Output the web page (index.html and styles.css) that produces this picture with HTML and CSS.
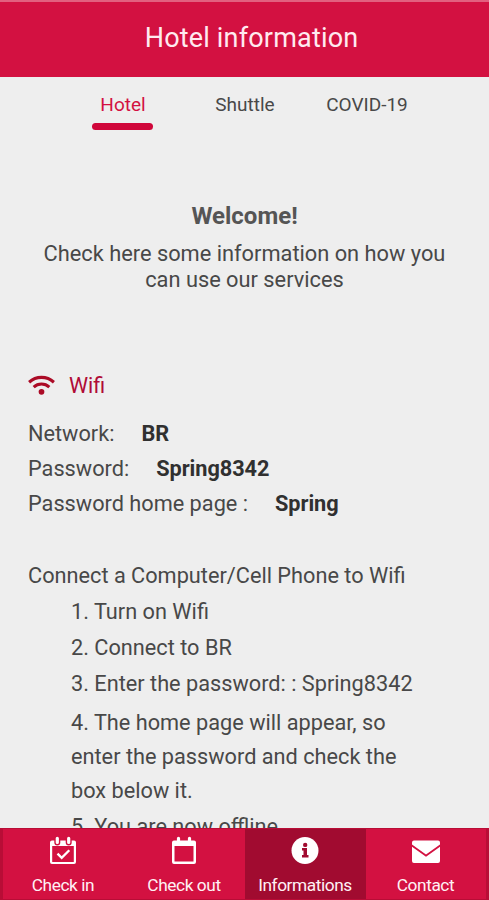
FILE: index.html
```html
<!DOCTYPE html>
<html lang="en">
<head>
<meta charset="utf-8">
<title>Hotel information</title>
<link rel="stylesheet" href="styles.css">
</head>
<body>
<div class="app">
  <header class="header"><h1>Hotel information</h1></header>
  <main class="content">
    <nav class="tabs">
      <a class="tab active">Hotel</a>
      <a class="tab">Shuttle</a>
      <a class="tab">COVID-19</a>
    </nav>
    <section class="welcome">
      <h2>Welcome!</h2>
      <p>Check here some information on how you<br>can use our services</p>
    </section>
    <section class="wifi">
      <h3>
        <svg class="wifi-icon" viewBox="0 0 28 22"><g fill="none" stroke="currentColor" stroke-width="3.200" stroke-linecap="butt"><path d="M1 7.600C8.500 .8 19.500 .8 27 7.600"/><path d="M5.800 12.600C10.500 8.300 17.500 8.300 22.200 12.600"/></g><circle cx="14" cy="17.600" r="3" fill="currentColor"/></svg>
        <span>Wifi</span>
      </h3>
      <dl>
        <div><dt>Network:</dt><dd>BR</dd></div>
        <div><dt>Password:</dt><dd>Spring8342</dd></div>
        <div><dt>Password home page :</dt><dd>Spring</dd></div>
      </dl>
      <h4>Connect a Computer/Cell Phone to Wifi</h4>
      <ol>
        <li>1. Turn on Wifi</li>
        <li>2. Connect to BR</li>
        <li>3. Enter the password: : Spring8342</li>
        <li class="long">4. The home page will appear, so<br>enter the password and check the<br>box below it.</li>
        <li>5. You are now offline</li>
      </ol>
    </section>
  </main>
  <nav class="bottom">
    <a class="item">
      <svg viewBox="0 0 28 30"><path d="M3 4.500h22a2 2 0 0 1 2 2v19.500a2 2 0 0 1-2 2H3a2 2 0 0 1-2-2V6.500a2 2 0 0 1 2-2zM3.200 10v16h21.600V10z" fill="#fff" fill-rule="evenodd"/><path class="ring" d="M8.300 3v3.500M19.700 3v3.500"/><path d="M8.300 2.300v4.200M19.700 2.300v4.200" stroke="#fff" stroke-width="3.200" stroke-linecap="round"/><path d="m8.500 17.600 4.200 4.200 7.600-7.600" fill="none" stroke="#fff" stroke-width="2.300"/></svg>
      <span>Check in</span>
    </a>
    <a class="item">
      <svg viewBox="0 0 28 30"><path d="M4 4.500h20a2 2 0 0 1 2 2v19.500a2 2 0 0 1-2 2H4a2 2 0 0 1-2-2V6.500a2 2 0 0 1 2-2zM4.500 10v15.500h19V10z" fill="#fff" fill-rule="evenodd"/><path d="M8.500 2.300v4.200M19.500 2.300v4.200" stroke="#fff" stroke-width="3.200" stroke-linecap="round"/></svg>
      <span>Check out</span>
    </a>
    <a class="item selected">
      <svg viewBox="0 0 28 30"><circle cx="14" cy="14.500" r="13.500" fill="#fff"/><path d="M11 12h5v7h1.500v2.500H11V19h1.500v-4.500H11z" fill="#a10b30"/><circle cx="14.200" cy="8.900" r="2.200" fill="#a10b30"/></svg>
      <span>Informations</span>
    </a>
    <a class="item">
      <svg viewBox="0 0 28 30"><path d="M2 4.500h24a2 2 0 0 1 2 2V8.500L14 18.500 0 8.500V6.500a2 2 0 0 1 2-2z" fill="#fff"/><path d="M0 10.700 14 20.700 28 10.700V25a2 2 0 0 1-2 2H2a2 2 0 0 1-2-2z" fill="#fff"/></svg>
      <span>Contact</span>
    </a>
  </nav>
</div>
</body>
</html>
```
FILE: styles.css
```css
* { box-sizing: border-box; margin: 0; padding: 0; }
body { background: #eee; color: #484848; font-family: Roboto, sans-serif; font-size: 21.73px; }
.app { height: 900px; display: flex; flex-direction: column; overflow: hidden; }
.header { flex: none; height: 77px; background: #d31141; border-top: 2px solid #e2607f; display: flex; justify-content: center; padding: 20px 0 0 14px; }
.header h1 { font-size: 27px; line-height: 32px; font-weight: 400; color: #ffeaf0; letter-spacing: .18px; }
.content { flex: 1; min-height: 0; overflow: hidden; }
.tabs { display: grid; grid-template-columns: repeat(3, 122px); justify-content: center; height: 54px; padding: 16px 0 0 1px; font-size: 19px; line-height: 24px; }
.tab { display: flex; flex-direction: column; align-items: center; }
.tab.active { color: #d31141; }
.tab.active::after { content: ""; width: 61px; height: 7px; border-radius: 4px; background: #d0063a; margin: 6px 1px 0 0; }
.welcome { margin-top: 70px; text-align: center; line-height: 26px; }
.welcome h2 { font-size: 24px; line-height: 30px; font-weight: 700; color: #555; margin-bottom: 10px; }
.welcome p { font-size: 21.8px; }
.wifi { padding: 79px 28px 0; }
.wifi h3 { display: flex; align-items: center; gap: 14px; height: 26px; font-weight: 400; font-size: 21.5px; color: #b00b36; }
.wifi-icon { width: 27px; height: 21px; color: #ab0b26; }
dl { margin-top: 19px; }
dl div { display: flex; gap: 27px; line-height: 34.800px; }
dd { font-weight: 700; color: #303030; letter-spacing: -.05px; }
h4 { font-size: inherit; font-weight: 400; line-height: 36px; margin-top: 37px; }
ol { list-style: none; padding-left: 43px; line-height: 36px; }
.long { line-height: 34px; padding-top: 4px; margin-bottom: 1px; }
.bottom { flex: none; height: 72px; display: grid; grid-template-columns: 121px 121px 121px 120px; background: #d31141; border: 1px solid #b80d36; border-width: 1px 3px; }
.item { display: flex; flex-direction: column; align-items: center; padding: 7px 1px 0 0; color: #fff0f4; font-size: 17.3px; line-height: 22px; }
.item svg { width: 28px; height: 30px; margin-bottom: 8px; }
.item span { letter-spacing: -.42px; }
.ring { fill: none; stroke: #d31141; stroke-width: 6; stroke-linecap: round; }
.selected { background: #a10b30; }
```
